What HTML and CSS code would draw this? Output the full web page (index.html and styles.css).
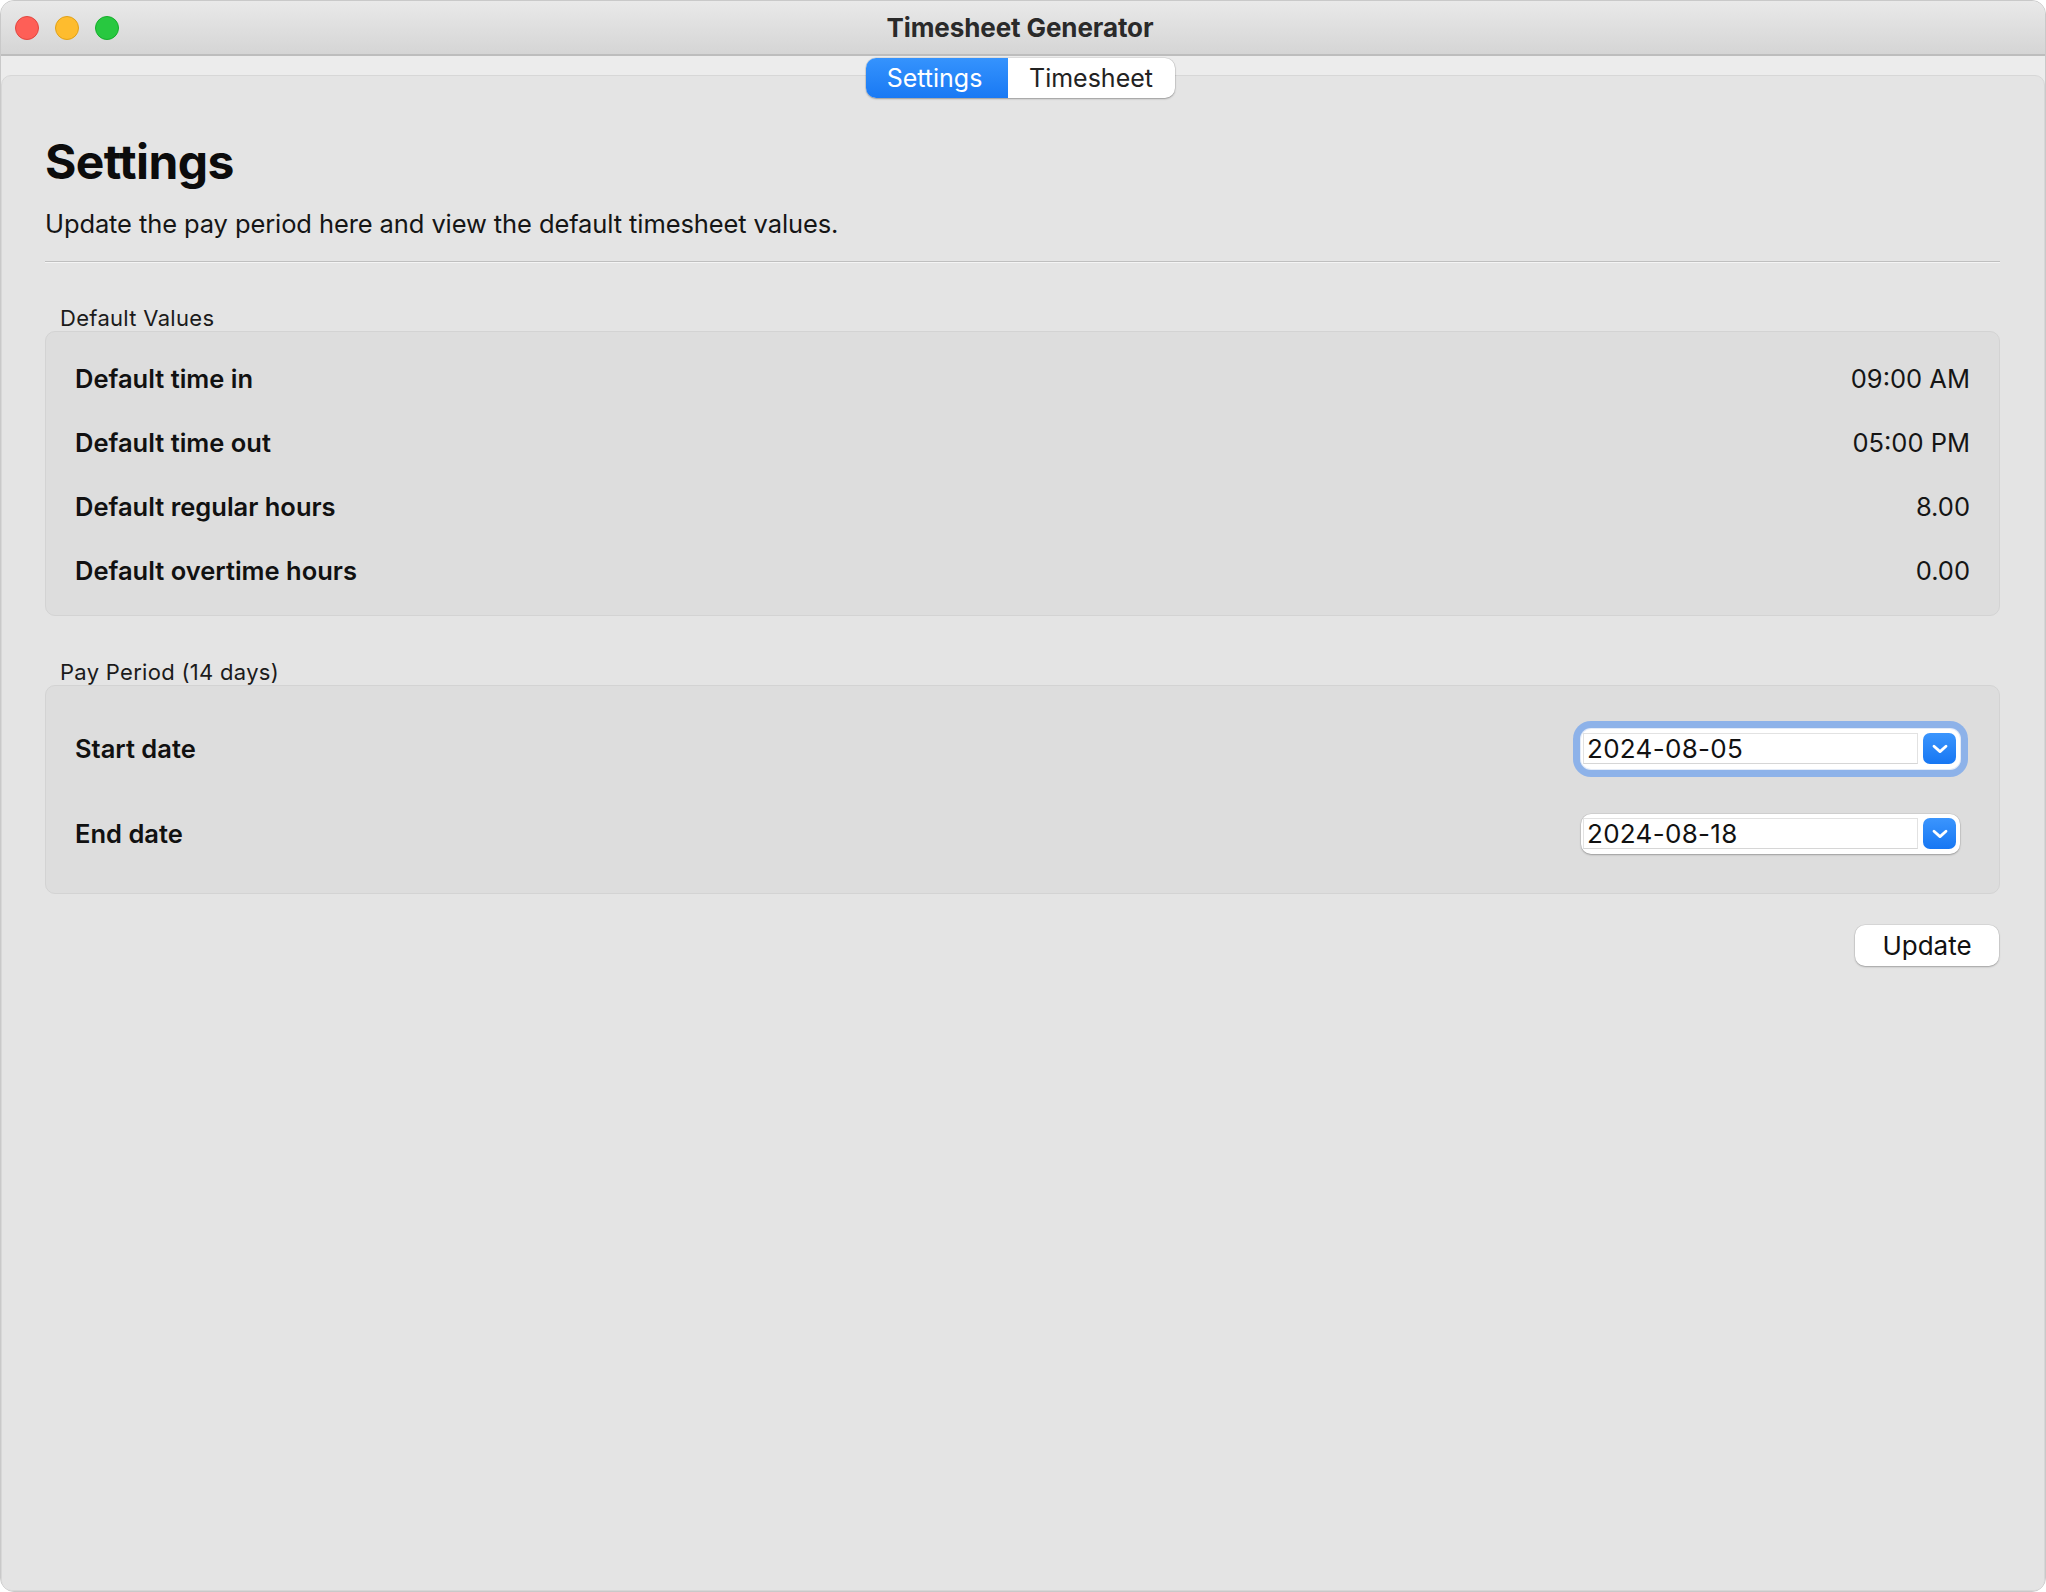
FILE: index.html
```html
<!DOCTYPE html>
<html lang="en">
<head>
<meta charset="utf-8">
<title>Timesheet Generator</title>
<link rel="stylesheet" href="styles.css">
</head>
<body>
<div class="window">
  <div class="titlebar">
    <div class="lights">
      <span class="light red"></span>
      <span class="light yellow"></span>
      <span class="light green"></span>
    </div>
    <div class="title">Timesheet Generator</div>
  </div>
  <div class="tabbar">
    <div class="segmented">
      <div class="seg active">Settings</div>
      <div class="seg">Timesheet</div>
    </div>
  </div>
  <div class="tabbox">
    <h1 class="heading">Settings</h1>
    <p class="subtitle">Update the pay period here and view the default timesheet values.</p>
    <div class="divider"></div>

    <div class="group-label">Default Values</div>
    <div class="group group-values">
      <div class="row"><span class="label">Default time in</span><span class="value">09:00 AM</span></div>
      <div class="row"><span class="label">Default time out</span><span class="value">05:00 PM</span></div>
      <div class="row"><span class="label">Default regular hours</span><span class="value">8.00</span></div>
      <div class="row"><span class="label">Default overtime hours</span><span class="value">0.00</span></div>
    </div>

    <div class="group-label second">Pay Period (14 days)</div>
    <div class="group group-dates">
      <div class="row date-row">
        <span class="label">Start date</span>
        <div class="picker focused">
          <div class="field">2024-08-05</div>
          <div class="dropbtn">
            <svg width="16" height="10" viewBox="0 0 16 10"><path d="M2 2.2 L8 7.6 L14 2.2" fill="none" stroke="#fff" stroke-width="2.8" stroke-linecap="round" stroke-linejoin="round"/></svg>
          </div>
        </div>
      </div>
      <div class="row date-row">
        <span class="label">End date</span>
        <div class="picker">
          <div class="field">2024-08-18</div>
          <div class="dropbtn">
            <svg width="16" height="10" viewBox="0 0 16 10"><path d="M2 2.2 L8 7.6 L14 2.2" fill="none" stroke="#fff" stroke-width="2.8" stroke-linecap="round" stroke-linejoin="round"/></svg>
          </div>
        </div>
      </div>
    </div>

    <div class="actions">
      <button class="btn">Update</button>
    </div>
  </div>
</div>
</body>
</html>
```

FILE: styles.css
```css
* { box-sizing: border-box; }

html, body {
  margin: 0;
  padding: 0;
  background: #ffffff;
}

body {
  font-family: "Inter", "Liberation Sans", sans-serif;
  color: #111111;
}

.window {
  width: 2046px;
  height: 1592px;
  border-radius: 14px;
  overflow: hidden;
  background: #ececec;
  border: 1px solid #c9c9c9;
  display: flex;
  flex-direction: column;
}

.titlebar {
  height: 55px;
  flex: none;
  background: linear-gradient(#e9e9e9, #d5d5d5);
  border-bottom: 2px solid #bdbdbd;
  display: flex;
  align-items: center;
}

.lights {
  display: flex;
  gap: 16px;
  padding-left: 14px;
  padding-top: 1px;
}

.light {
  width: 24px;
  height: 24px;
  border-radius: 50%;
  display: block;
}
.red { background: #fe5f57; border: 1px solid #e2463f; }
.yellow { background: #febc2e; border: 1px solid #e1a116; }
.green { background: #28c840; border: 1px solid #14ae2a; }

.title {
  flex: 1;
  text-align: center;
  font-weight: 700;
  font-size: 26px;
  color: #2a2a2a;
  margin-right: 124px;
  letter-spacing: -0.1px;
}

.tabbar {
  flex: none;
  display: flex;
  justify-content: center;
  padding-top: 2px;
  padding-right: 6px;
  position: relative;
  z-index: 1;
}

.segmented {
  display: flex;
  height: 40px;
  border-radius: 10px;
  background: #ffffff;
  box-shadow: 0 1px 2px rgba(0, 0, 0, 0.28), 0 0 0 0.5px rgba(0, 0, 0, 0.12);
  overflow: hidden;
}

.seg {
  font-size: 25px;
  line-height: 40px;
  color: #222;
  width: 167px;
  text-align: center;
}

.seg.active {
  width: 142px;
  color: #ffffff;
  background: linear-gradient(#3593fd, #1979f4);
  padding-right: 4px;
}

.tabbox {
  flex: 1;
  margin: -23px 0 0 0;
  background: #e4e4e4;
  border: 1px solid #d7d7d7;
  border-radius: 10px;
  padding: 58px 44px 0 43px;
}

.heading {
  margin: 0;
  font-size: 48px;
  line-height: 56px;
  font-weight: 700;
  letter-spacing: -0.6px;
  color: #0c0c0c;
}

.subtitle {
  margin: 19px 0 0 0;
  font-size: 25.5px;
  line-height: 30px;
  color: #151515;
  letter-spacing: -0.1px;
}

.divider {
  margin-top: 22px;
  height: 2px;
  border-top: 1px solid #bfbfbf;
  border-bottom: 1px solid #f4f4f4;
}

.group-label {
  font-size: 22px;
  line-height: 26px;
  padding-left: 15px;
  color: #1b1b1b;
  margin-top: 42px;
  letter-spacing: 0.3px;
}

.group-label.second {
  margin-top: 43px;
}

.group {
  background: #dddddd;
  border: 1px solid #d3d3d3;
  border-radius: 10px;
}

.group-values {
  padding: 14px 29px 13px 29px;
}

.row {
  display: flex;
  align-items: center;
  justify-content: space-between;
  height: 64px;
}

.label {
  font-size: 25.5px;
  font-weight: 600;
  color: #111;
}

.value {
  font-size: 25.5px;
  color: #151515;
}

.group-dates {
  padding: 20px 39px 17px 29px;
}

.date-row {
  height: 85px;
}

.picker {
  width: 379px;
  height: 40px;
  background: #ffffff;
  border-radius: 10px;
  box-shadow: 0 1px 2px rgba(0, 0, 0, 0.25), 0 0 0 0.5px rgba(0, 0, 0, 0.1);
  display: flex;
  align-items: center;
  padding: 0 4px 0 2px;
  gap: 5px;
}

.picker.focused {
  box-shadow: 0 0 0 1px #e3ebf8, 0 0 0 8px #8db2e9;
}

.field {
  flex: 1;
  height: 31px;
  border: 1px solid #e2e2e2;
  border-bottom-color: #d6d6d6;
  font-size: 26px;
  line-height: 29px;
  padding-left: 3px;
  color: #111;
  letter-spacing: 0.3px;
}

.dropbtn {
  width: 33px;
  height: 31px;
  border-radius: 7px;
  background: linear-gradient(#3b95fd, #1777f3);
  display: flex;
  align-items: center;
  justify-content: center;
}

.actions {
  display: flex;
  justify-content: flex-end;
  margin-top: 31px;
  padding-right: 1px;
}

.btn {
  width: 144px;
  height: 41px;
  border: none;
  border-radius: 10px;
  background: #ffffff;
  box-shadow: 0 1px 2px rgba(0, 0, 0, 0.25), 0 0 0 0.5px rgba(0, 0, 0, 0.1);
  font-family: "Inter", "Liberation Sans", sans-serif;
  font-size: 26px;
  color: #111;
  padding: 0;
}
```
